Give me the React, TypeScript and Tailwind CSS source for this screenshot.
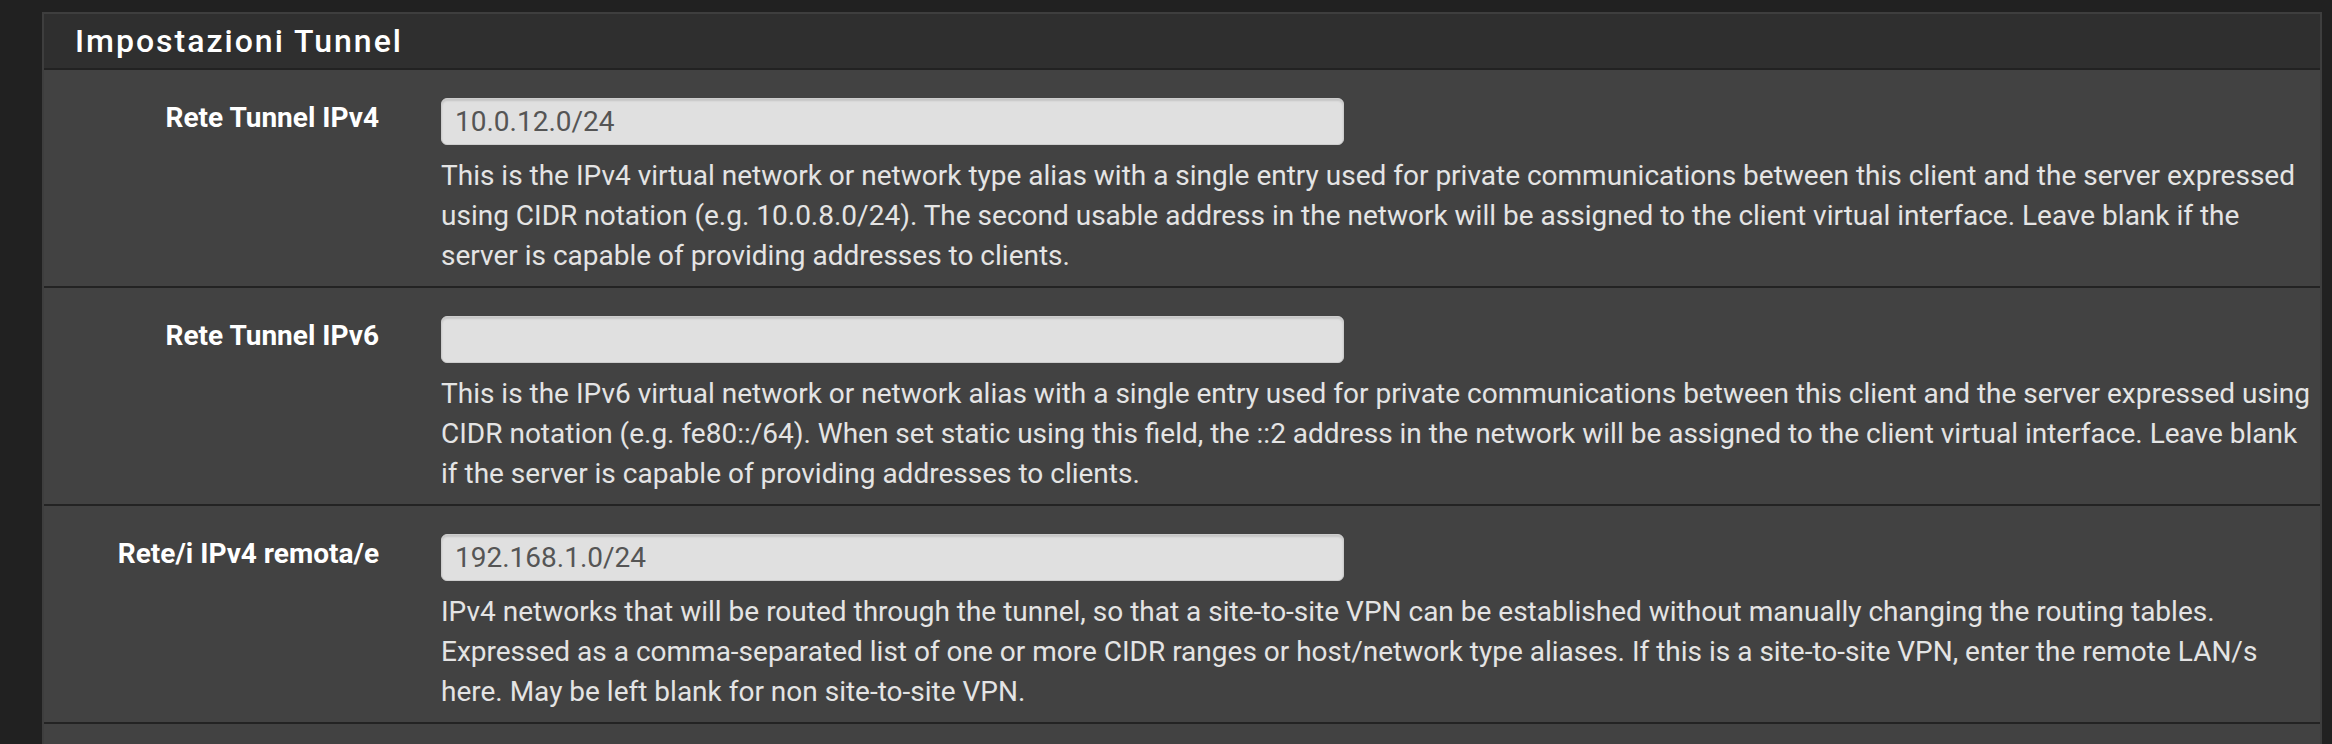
const rows = [
  {
    label: "Rete Tunnel IPv4",
    value: "10.0.12.0/24",
    help: "This is the IPv4 virtual network or network type alias with a single entry used for private communications between this client and the server expressed using CIDR notation (e.g. 10.0.8.0/24). The second usable address in the network will be assigned to the client virtual interface. Leave blank if the server is capable of providing addresses to clients.",
  },
  {
    label: "Rete Tunnel IPv6",
    value: "",
    help: "This is the IPv6 virtual network or network alias with a single entry used for private communications between this client and the server expressed using CIDR notation (e.g. fe80::/64). When set static using this field, the ::2 address in the network will be assigned to the client virtual interface. Leave blank if the server is capable of providing addresses to clients.",
  },
  {
    label: "Rete/i IPv4 remota/e",
    value: "192.168.1.0/24",
    help: "IPv4 networks that will be routed through the tunnel, so that a site-to-site VPN can be established without manually changing the routing tables. Expressed as a comma-separated list of one or more CIDR ranges or host/network type aliases. If this is a site-to-site VPN, enter the remote LAN/s here. May be left blank for non site-to-site VPN.",
  },
];

const App = () => {
  return (
    <div className="w-[2332px] h-[744px] overflow-hidden bg-[#212121] pt-[12px] pl-[42px] pr-[10px] font-['Roboto',sans-serif]">
      <div className="border-x-2 border-t-2 border-[#3e3e3e] bg-[#424242]">
        {/* header */}
        <div className="h-[56px] bg-[#2f2f2f] border-b-2 border-[#222] flex items-center pl-[31px]">
          <span className="text-white text-[32px] font-medium tracking-[2px]">
            Impostazioni Tunnel
          </span>
        </div>

        {rows.map((row) => (
          <div
            key={row.label}
            className="flex h-[218px] bg-[#424242] border-b-2 border-[#232323] pt-[28px]"
          >
            <div className="w-[350px] pr-[15px] text-right text-white text-[28px] leading-[40px] font-bold">
              {row.label}
            </div>
            <div className="flex-1 pl-[47px] pr-[4px]">
              <div className="w-[903px] h-[47px] rounded-[6px] bg-[#e0e0e0] border border-[#cdcdcd] shadow-[inset_0_2px_2px_rgba(0,0,0,0.12)] flex items-center pl-[13px] text-[28px] text-[#555]">
                {row.value}
              </div>
              <p className="mt-[11px] text-[28px] leading-[40px] text-[#e4e4e4]">
                {row.help}
              </p>
            </div>
          </div>
        ))}

        <div className="h-[40px] bg-[#424242]" />
      </div>
    </div>
  );
};

export default App;
